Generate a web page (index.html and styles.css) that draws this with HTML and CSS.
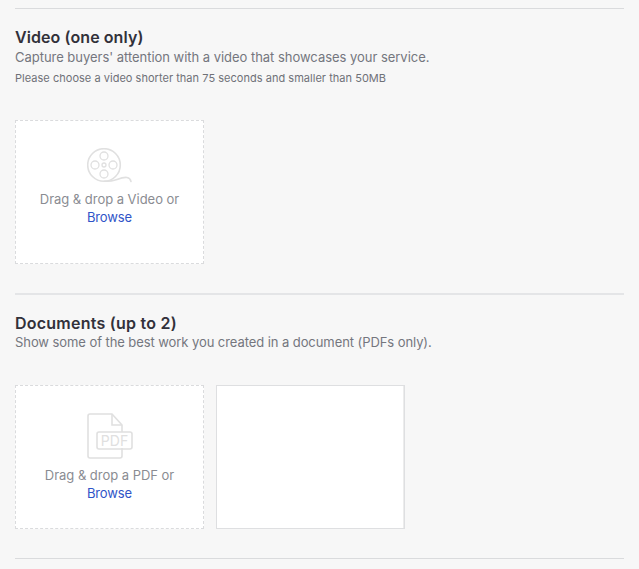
FILE: index.html
```html
<!DOCTYPE html>
<html lang="en">
<head>
<meta charset="utf-8">
<title>Gallery</title>
<link rel="stylesheet" href="styles.css">
</head>
<body>
<main class="page">
  <section class="section section-video">
    <h2 class="title">Video (one only)</h2>
    <p class="desc">Capture buyers' attention with a video that showcases your service.</p>
    <p class="note">Please choose a video shorter than 75 seconds and smaller than 50MB</p>
    <div class="tiles">
      <div class="tile drop">
        <svg class="icon" width="46" height="36" viewBox="0 0 46 36" fill="none" stroke="#e0e0e0" stroke-width="1.3">
          <circle cx="17" cy="17" r="16.3" stroke-width="1.6"/>
          <circle cx="17" cy="17" r="2"/>
          <circle cx="17" cy="8" r="4"/>
          <circle cx="17" cy="26" r="4"/>
          <circle cx="8" cy="17" r="4"/>
          <circle cx="26" cy="17" r="4"/>
          <path d="M17 33.3c6 0 9-.3 13-1.800 4-1.500 7-2.500 10-2 2 .4 3.500 1.800 4 4" stroke-width="1.600" stroke-linecap="round"/>
        </svg>
        <p class="drop-text">Drag &amp; drop a Video or</p>
        <a class="browse" href="#">Browse</a>
      </div>
    </div>
  </section>
  <section class="section section-docs">
    <h2 class="title">Documents (up to 2)</h2>
    <p class="desc">Show some of the best work you created in a document (PDFs only).</p>
    <div class="tiles">
      <div class="tile drop">
        <svg class="icon icon-doc" width="46" height="47" viewBox="0 0 46 47" fill="none" stroke="#e0e0e0" stroke-width="1.600">
          <path d="M1 19V3a2 2 0 0 1 2-2h22l10 11v7M1 18v25a2 2 0 0 0 2 2h30a2 2 0 0 0 2-2v-8"/>
          <path d="M25 1v11h10"/>
          <rect x="10" y="19" width="35" height="17" rx="2"/>
          <text class="pdf-mark" x="27.500" y="32.500" text-anchor="middle">PDF</text>
        </svg>
        <p class="drop-text">Drag &amp; drop a PDF or</p>
        <a class="browse" href="#">Browse</a>
      </div>
      <div class="tile empty"></div>
    </div>
  </section>
</main>
</body>
</html>
```
FILE: styles.css
```css
* { box-sizing: border-box; }
html, body { margin: 0; padding: 0; }
body {
  background: #f7f7f7;
  font-family: Inter, "Liberation Sans", sans-serif;
  color: #62646a;
}
.page { padding: 8px 15px 0; }
.page::after { content: ""; display: block; border-top: 1px solid #dadbdd; }
.section { border-top: 1px solid #dadbdd; padding-top: 18px; }
.section-video { height: 285px; }
.section-video .title { margin-bottom: 1px; }
.section-docs { height: 265px; border-top-width: 2px; border-top-color: #e4e5e7; }
.section-docs .title { letter-spacing: .24px; }
.section-docs .desc { letter-spacing: -.075px; }
.title {
  margin: 0;
  font-size: 16px;
  line-height: 20px;
  font-weight: 600;
  letter-spacing: .08px;
  color: #32313a;
}
.desc {
  margin: 0;
  font-size: 13px;
  line-height: 18px;
  letter-spacing: -.03px;
  color: #74767e;
}
.note {
  margin: 4px 0 0;
  font-size: 11px;
  line-height: 16px;
  letter-spacing: .03px;
  color: #6f7177;
}
.tiles { display: flex; gap: 12px; margin-top: 34px; }
.tile {
  width: 189px;
  height: 144px;
  background: #fff;
}
.drop {
  border: 1px dashed #dadbdd;
  display: flex;
  flex-direction: column;
  align-items: center;
  padding-top: 27px;
}
.empty { border: 1px solid #dedfe1; box-shadow: -1px 0 0 #ececec inset; }
.icon { display: block; }
.drop-text {
  margin: 6px 0 0;
  font-size: 13px;
  line-height: 18px;
  letter-spacing: -.03px;
  color: #8a8c92;
}
.browse {
  font-size: 13px;
  line-height: 18px;
  letter-spacing: -.1px;
  color: #2f54c8;
  text-decoration: none;
}
.pdf-mark {
  font-family: Inter, "Liberation Sans", sans-serif;
  font-size: 14px;
  font-weight: 400;
  fill: #e0e0e0;
  stroke: none;
}
```
